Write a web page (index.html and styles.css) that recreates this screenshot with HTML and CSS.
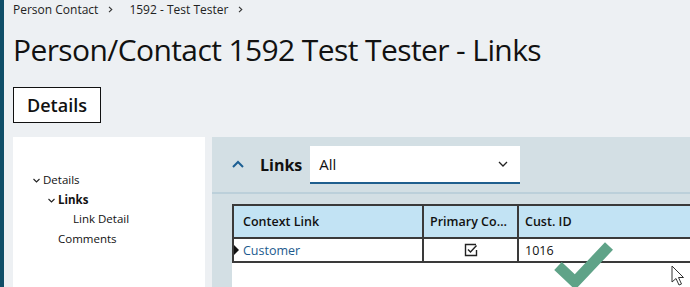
FILE: index.html
```html
<!DOCTYPE html>
<html lang="en">
<head>
<meta charset="UTF-8">
<title>Person/Contact 1592 Test Tester - Links</title>
<link rel="stylesheet" href="styles.css">
</head>
<body>
<div class="page">
  <div class="crumbs">
    <span>Person Contact</span>
    <svg class="sep" width="5" height="7" viewBox="0 0 5 7"><path d="M1 0.8 L3.8 3.5 L1 6.2" fill="none" stroke="#333" stroke-width="1.1"/></svg>
    <span>1592 - Test Tester</span>
    <svg class="sep" width="5" height="7" viewBox="0 0 5 7"><path d="M1 0.8 L3.8 3.5 L1 6.2" fill="none" stroke="#333" stroke-width="1.1"/></svg>
  </div>

  <h1>Person/Contact 1592 Test Tester - Links</h1>

  <button class="details-btn">Details</button>

  <div class="main">
    <div class="tree">
      <div class="node lvl1"><svg class="caret" width="7" height="5" viewBox="0 0 7 5"><path d="M0.5 1 L3.5 4 L6.5 1" fill="none" stroke="#222" stroke-width="1.1"/></svg>Details</div>
      <div class="node lvl2 current"><svg class="caret" width="7" height="5" viewBox="0 0 7 5"><path d="M0.5 1 L3.5 4 L6.5 1" fill="none" stroke="#222" stroke-width="1.1"/></svg>Links</div>
      <div class="node lvl3">Link Detail</div>
      <div class="node lvl2 leaf">Comments</div>
    </div>

    <div class="links-panel">
      <div class="panel-head">
        <svg class="collapse" width="12" height="8" viewBox="0 0 12 8"><path d="M1 7 L6 2 L11 7" fill="none" stroke="#1c5f93" stroke-width="2"/></svg>
        <span class="panel-title">Links</span>
        <div class="select">
          <span>All</span>
          <svg width="10" height="6" viewBox="0 0 10 6"><path d="M1 1 L5 5 L9 1" fill="none" stroke="#222" stroke-width="1.3"/></svg>
        </div>
      </div>
      <div class="panel-body">
        <div class="grid">
          <div class="row head">
            <div class="cell c-link">Context Link</div>
            <div class="cell c-primary">Primary Co&hellip;</div>
            <div class="cell c-id">Cust. ID</div>
          </div>
          <div class="row">
            <div class="cell c-link"><span class="row-mark"></span><a href="#">Customer</a></div>
            <div class="cell c-primary center">
              <svg width="14" height="14" viewBox="0 0 14 14"><path d="M12 1.5 H1.5 V12.5 H12.5 V7" fill="none" stroke="#222" stroke-width="1.4"/><path d="M4 6.5 L6.5 9 L12.5 2.5" fill="none" stroke="#222" stroke-width="1.4"/></svg>
            </div>
            <div class="cell c-id">1016</div>
          </div>
        </div>
      </div>
    </div>
  </div>

  <svg class="big-check" width="60" height="54" viewBox="0 0 60 54"><path d="M4 32 L21 48 L55 12" fill="none" stroke="#5fa388" stroke-width="11" stroke-linejoin="miter"/></svg>
  <svg class="cursor" width="14" height="22" viewBox="0 0 14 22"><path d="M1 1 L1 17 L5 13.5 L8 20 L10.5 19 L7.5 12.5 L12.5 12.5 Z" fill="#fff" stroke="#333" stroke-width="1"/></svg>
</div>
</body>
</html>
```
FILE: styles.css
```css
* {
    box-sizing: border-box;
}

body {
    margin: 0;
    background-color: #edf0f3;
    font-family: "Open Sans", sans-serif;
    color: #111;
    overflow: hidden;
}

.page {
    position: relative;
    height: 287px;
    border-left: 4px solid #0f4e68;
    padding-left: 9px;
    overflow: hidden;
}

.crumbs {
    display: flex;
    align-items: center;
    font-size: 12px;
    height: 18px;
    color: #222;
}

.crumbs .sep {
    margin: 1px 16px 0 10px;
}

h1 {
    margin: 12px 0 0;
    font-weight: 400;
    font-size: 30px;
    letter-spacing: -0.6px;
    line-height: 40px;
    height: 56px;
}

.details-btn {
    display: block;
    width: 88px;
    height: 36px;
    margin-top: 1px;
    background: #fff;
    border: 1px solid #111;
    font-family: "Open Sans", sans-serif;
    font-size: 18px;
    font-weight: 600;
    color: #111;
    padding: 0;
}

.main {
    display: flex;
    gap: 7px;
    margin-top: 14px;
    height: 160px;
}

.tree {
    flex: 0 0 192px;
    background: #fff;
    padding: 35px 0 0 20px;
    font-size: 11.5px;
}

.node {
    height: 19.5px;
    line-height: 16px;
    display: flex;
    align-items: flex-start;
}

.caret {
    margin: 6px 3px 0 0;
}

.lvl2 { padding-left: 15px; }
.lvl2.leaf { padding-left: 25px; }
.lvl3 { padding-left: 40px; }

.current {
    font-weight: 700;
}

.links-panel {
    flex: 1;
    min-width: 0;
    overflow: hidden;
    background: #d3dfe4;
    display: flex;
    flex-direction: column;
}

.panel-head {
    height: 57px;
    flex: none;
    display: flex;
    align-items: center;
    padding-left: 20px;
    border-bottom: 2px solid #bcd0da;
}

.collapse {
    margin-top: -2px;
}

.panel-title {
    font-weight: 700;
    font-size: 16px;
    margin: 0 8px 0 16px;
}

.select {
    flex: 0 0 210px;
    height: 38px;
    margin-top: 1px;
    background: #fff;
    border-bottom: 2px solid #1f5f8e;
    display: flex;
    align-items: center;
    justify-content: space-between;
    padding: 0 12px 0 9px;
    font-size: 15px;
}

.panel-body {
    flex: 1;
    display: flex;
    padding: 10px 0 0 20px;
}

.grid {
    flex: 0 0 640px;
    background: #fff;
    font-size: 12.5px;
}

.row {
    display: flex;
    height: 24px;
    border-bottom: 2px solid #3a3a3a;
}

.row.head {
    height: 35px;
    background: #c2e3f4;
    border-top: 2px solid #3a3a3a;
    font-weight: 600;
}

.cell {
    display: flex;
    align-items: center;
    padding: 0 6px;
    white-space: nowrap;
    overflow: hidden;
    border-left: 2px solid #3a3a3a;
}

.c-link { flex: 0 0 190px; position: relative; padding-left: 9px; }
.c-primary { flex: 0 0 95px; }
.c-id { flex: 1; }
.center { justify-content: center; }

.row-mark {
    position: absolute;
    left: 0;
    top: 6px;
    border-left: 5px solid #111;
    border-top: 5px solid transparent;
    border-bottom: 5px solid transparent;
}

a {
    color: #1c5a8e;
    text-decoration: none;
}

.big-check {
    position: absolute;
    left: 550px;
    top: 234px;
}

.cursor {
    position: absolute;
    left: 667px;
    top: 265px;
}
```
